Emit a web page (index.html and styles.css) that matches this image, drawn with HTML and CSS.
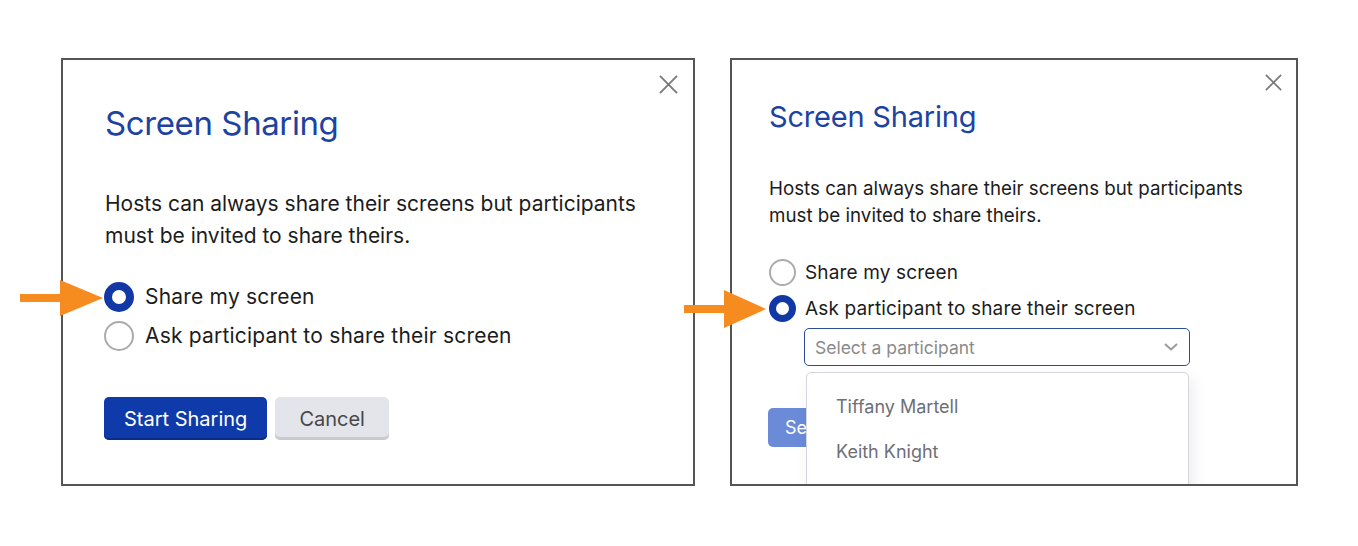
FILE: index.html
```html
<!DOCTYPE html>
<html lang="en">
<head>
<meta charset="utf-8">
<title>Screen Sharing</title>
<link rel="stylesheet" href="styles.css">
</head>
<body>
<main class="stage">
  <div class="frame">
    <svg class="arrow arrow-lg" width="84" height="36" viewBox="0 0 84 36"><rect x="0" y="14" width="44" height="8" fill="#f68b1f"/><polygon points="40,0 83,18 40,36" fill="#f68b1f"/></svg>
    <section class="dialog dialog-lg">
      <button class="close" aria-label="Close"><svg viewBox="0 0 20 20"><path d="M1 1 L19 19 M19 1 L1 19" stroke="#7a7a7a" stroke-width="2" fill="none"/></svg></button>
      <h1 class="title">Screen Sharing</h1>
      <p class="desc">Hosts can always share their screens but participants<br>must be invited to share theirs.</p>
      <div class="options">
        <div class="option"><span class="radio checked"></span><span>Share my screen</span></div>
        <div class="option"><span class="radio"></span><span>Ask participant to share their screen</span></div>
      </div>
      <div class="actions">
        <button class="btn btn-primary">Start Sharing</button>
        <button class="btn btn-secondary">Cancel</button>
      </div>
    </section>
  </div>
  <div class="frame">
    <svg class="arrow arrow-sm" width="84" height="38" viewBox="0 0 84 38"><rect x="0" y="15" width="44" height="8" fill="#f68b1f"/><polygon points="40,0 82,19 40,38" fill="#f68b1f"/></svg>
    <section class="dialog dialog-sm">
      <button class="close" aria-label="Close"><svg viewBox="0 0 20 20"><path d="M1 1 L19 19 M19 1 L1 19" stroke="#7a7a7a" stroke-width="2" fill="none"/></svg></button>
      <h1 class="title">Screen Sharing</h1>
      <p class="desc">Hosts can always share their screens but participants<br>must be invited to share theirs.</p>
      <div class="options">
        <div class="option"><span class="radio"></span><span>Share my screen</span></div>
        <div class="option"><span class="radio checked"></span><span>Ask participant to share their screen</span></div>
        <div class="select-wrap">
          <div class="select"><span class="placeholder">Select a participant</span><svg class="chevron" viewBox="0 0 14 8"><path d="M1 1 L7 6.5 L13 1" stroke="#9a9a9a" stroke-width="2" fill="none"/></svg></div>
          <ul class="menu">
            <li>Tiffany Martell</li>
            <li>Keith Knight</li>
          </ul>
        </div>
      </div>
      <div class="actions">
        <button class="btn btn-primary btn-disabled">Send Request</button>
      </div>
    </section>
  </div>
</main>
</body>
</html>
```
FILE: styles.css
```css
* { box-sizing: border-box; }
html, body { margin: 0; padding: 0; background: #fff; }
body { font-family: Inter, "Noto Sans", sans-serif; color: #1c1c1c; }

.stage {
  display: flex;
  gap: 35px;
  padding: 58px 0 0 61px;
}
.frame { position: relative; }

.dialog {
  position: relative;
  height: 428px;
  border: 2px solid #555;
  background: #fff;
  overflow: hidden;
  display: flex;
  flex-direction: column;
}
.dialog-lg { width: 634px; padding: 0 42px; }
.dialog-sm { width: 568px; padding: 0 37px; }

.close {
  position: absolute;
  border: 0;
  background: none;
  padding: 0;
  cursor: pointer;
}
.close svg { display: block; width: 100%; height: 100%; }
.dialog-lg .close { top: 15px; right: 15px; width: 19px; height: 19px; }
.dialog-sm .close { top: 14px; right: 14px; width: 17px; height: 17px; }

.title {
  margin: 0;
  font-weight: 400;
  color: #1d43a2;
}
.dialog-lg .title { font-size: 33px; line-height: 40px; letter-spacing: -0.4px; margin-top: 43px; }
.dialog-sm .title { font-size: 29px; line-height: 36px; letter-spacing: -0.2px; margin-top: 39px; }

.desc { margin: 0; }
.dialog-lg .desc { font-size: 21px; line-height: 32px; margin-top: 45px; }
.dialog-sm .desc { font-size: 18.75px; line-height: 27px; margin-top: 40px; }

.options { display: flex; flex-direction: column; }
.dialog-lg .options { margin: 25px 0 0 -1px; }
.dialog-sm .options { margin-top: 25px; }

.option { display: flex; align-items: center; }
.dialog-lg .option { height: 39px; gap: 11px; font-size: 21px; letter-spacing: 0.2px; }
.dialog-sm .option { height: 36px; gap: 9px; font-size: 19px; letter-spacing: 0.15px; }

.radio {
  flex: none;
  border-radius: 50%;
  border: 2.5px solid #ababab;
  background: #fff;
}
.dialog-lg .radio { width: 30px; height: 30px; }
.dialog-sm .radio { width: 27px; height: 27px; }
.dialog-lg .radio.checked { border: 8.5px solid #1238a6; }
.dialog-sm .radio.checked { border: 7.5px solid #1238a6; }

.select-wrap { position: relative; margin: 2px 0 0 35px; width: 386px; letter-spacing: 0; }
.select {
  height: 38px;
  border: 1.5px solid #2a4e92;
  border-radius: 5px;
  display: flex;
  align-items: center;
  justify-content: space-between;
  padding: 0 11px 0 10px;
}
.placeholder { color: #8a8a8a; font-size: 17.5px; }
.chevron { width: 14px; height: 8px; }

.menu {
  position: absolute;
  top: 44px;
  left: 2px;
  width: 383px;
  height: 160px;
  margin: 0;
  padding: 22px 0 0 29px;
  list-style: none;
  background: #fff;
  border: 1.5px solid #d4d6db;
  border-radius: 5px;
  box-shadow: 4px 6px 16px rgba(0, 0, 0, 0.08);
  z-index: 2;
}
.menu li { font-size: 18px; line-height: 24px; color: #6c6f77; margin-bottom: 21px; }

.actions { display: flex; gap: 8px; }
.dialog-lg .actions { margin: 42px 0 0 -1px; }
.dialog-sm .actions { margin-top: 42px; }

.btn {
  font-family: inherit;
  border: 0;
  border-radius: 5px;
  cursor: pointer;
}
.dialog-lg .btn { height: 43px; font-size: 20px; padding: 0 20px; }
.dialog-sm .btn { height: 39px; font-size: 18px; padding: 0 17px; margin-left: -1px; }
.btn-primary {
  background: #0f3aa9;
  color: #fff;
  box-shadow: inset 0 -2px 0 #0b2e88;
}
.dialog-lg .btn-secondary {
  background: #e4e5ea;
  color: #474747;
  box-shadow: inset 0 -3px 0 #c8cad0;
  padding: 0 24px;
}
.dialog-sm .btn-disabled { background: #6b8bd8; box-shadow: none; }

.arrow { position: absolute; z-index: 3; }
.arrow-lg { left: -41px; top: 222px; }
.arrow-sm { left: -46px; top: 232px; }
```
